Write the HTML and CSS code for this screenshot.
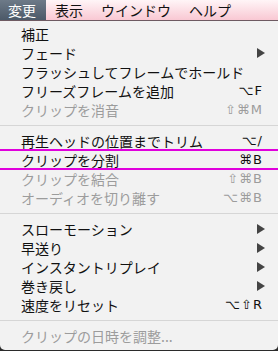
FILE: index.html
```html
<!DOCTYPE html>
<html lang="ja">
<head>
<meta charset="utf-8">
<link rel="stylesheet" href="styles.css">
</head>
<body>
<div class="menubar">
  <span class="mb-item active">変更</span>
  <span class="mb-item">表示</span>
  <span class="mb-item">ウインドウ</span>
  <span class="mb-item">ヘルプ</span>
</div>
<div class="menu">
  <div class="item"><span class="label">補正</span></div>
  <div class="item"><span class="label">フェード</span><svg class="arrow" width="8" height="10" viewBox="0 0 8 10"><path d="M0 0L8 5L0 10Z"/></svg></div>
  <div class="item"><span class="label">フラッシュしてフレームでホールド</span></div>
  <div class="item"><span class="label">フリーズフレームを追加</span><span class="key">⌥F</span></div>
  <div class="item disabled"><span class="label">クリップを消音</span><span class="key">⇧⌘M</span></div>
  <div class="sep"></div>
  <div class="item"><span class="label">再生ヘッドの位置までトリム</span><span class="key">⌥/</span></div>
  <div class="item marked"><span class="label">クリップを分割</span><span class="key">⌘B</span></div>
  <div class="item disabled"><span class="label">クリップを結合</span><span class="key">⇧⌘B</span></div>
  <div class="item disabled"><span class="label">オーディオを切り離す</span><span class="key">⌥⌘B</span></div>
  <div class="sep"></div>
  <div class="item"><span class="label">スローモーション</span><svg class="arrow" width="8" height="10" viewBox="0 0 8 10"><path d="M0 0L8 5L0 10Z"/></svg></div>
  <div class="item"><span class="label">早送り</span><svg class="arrow" width="8" height="10" viewBox="0 0 8 10"><path d="M0 0L8 5L0 10Z"/></svg></div>
  <div class="item"><span class="label">インスタントリプレイ</span><svg class="arrow" width="8" height="10" viewBox="0 0 8 10"><path d="M0 0L8 5L0 10Z"/></svg></div>
  <div class="item"><span class="label">巻き戻し</span><svg class="arrow" width="8" height="10" viewBox="0 0 8 10"><path d="M0 0L8 5L0 10Z"/></svg></div>
  <div class="item"><span class="label">速度をリセット</span><span class="key">⌥⇧R</span></div>
  <div class="sep"></div>
  <div class="item disabled"><span class="label">クリップの日時を調整...</span></div>
</div>
</body>
</html>
```

FILE: styles.css
```css
html, body {
  margin: 0;
  padding: 0;
}
body {
  width: 278px;
  height: 351px;
  background: #2b2b2b;
  overflow: hidden;
  font-family: "Noto Sans CJK JP", "DejaVu Sans", sans-serif;
  font-size: 14px;
  color: #111;
}
.menubar {
  display: flex;
  height: 20px;
  background: linear-gradient(#fff5f7, #f9c8d3);
  border-bottom: 1px solid #6e5a62;
}
.mb-item {
  padding: 0 9px;
  line-height: 20px;
  color: #111;
}
.mb-item.active {
  padding-left: 8px;
  padding-right: 10px;
  color: #fff;
  background: linear-gradient(#6d7a88, #4c5968);
}
.menu {
  background: #f2f2f2;
  padding: 3px 0 5px;
  border-radius: 0 0 5px 5px;
}
.item {
  position: relative;
  display: flex;
  align-items: center;
  height: 19px;
  padding: 0 15px 0 21px;
}
.label {
  flex: 1;
  white-space: nowrap;
}
.key {
  font-family: "DejaVu Sans", sans-serif;
  font-size: 13px;
  letter-spacing: 1px;
}
.arrow {
  fill: #444;
  margin-right: -2px;
}
.disabled {
  color: #9c9c9c;
}
.sep {
  height: 12px;
  display: flex;
  align-items: center;
}
.sep::before {
  content: "";
  flex: 1;
  height: 1px;
  background: #d6d6d6;
}
.marked::before,
.marked::after {
  content: "";
  position: absolute;
  left: 0;
  right: 0;
  height: 2px;
  background: #e000dc;
}
.marked::before { top: -1px; }
.marked::after { bottom: -1px; }
```
